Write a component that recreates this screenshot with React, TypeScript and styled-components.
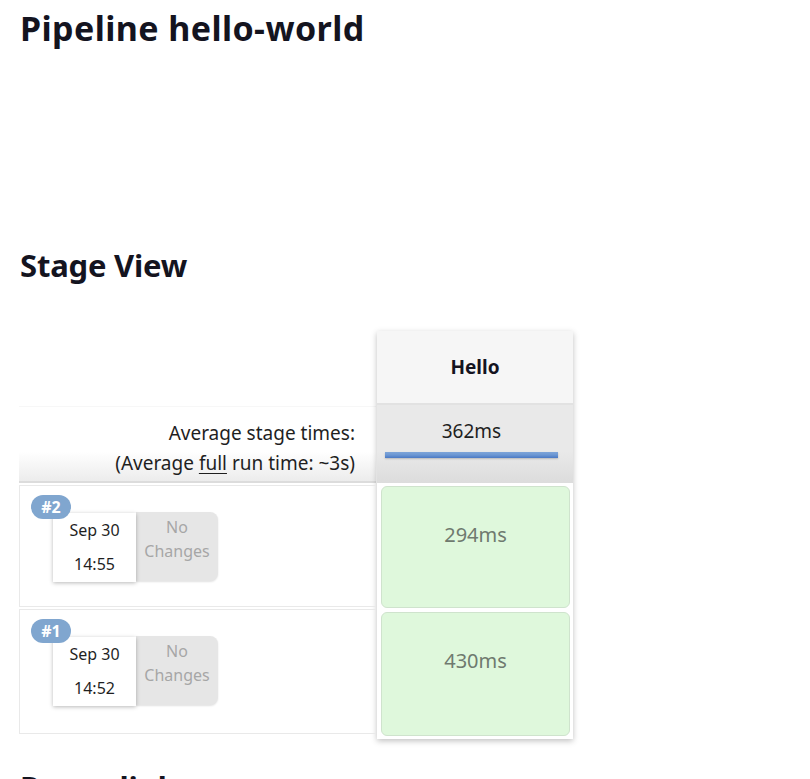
import React from "react";
import styled, { createGlobalStyle } from "styled-components";

const Global = createGlobalStyle`
  html, body { margin: 0; padding: 0; background: #fff; }
  body { font-family: "Noto Sans", "Open Sans", sans-serif; color: #14141f; }
`;

const Page = styled.div`
  padding: 0 20px;
  width: 810px;
  height: 779px;
  box-sizing: border-box;
  overflow: hidden;
`;

const Title = styled.h1`
  margin: 0;
  padding-top: 4px;
  font-size: 34px;
  line-height: 48px;
  font-weight: 700;
  letter-spacing: 0.4px;
`;

const SectionTitle = styled.h2<{ $top: number }>`
  margin: ${(p) => p.$top}px 0 0;
  font-size: 31px;
  line-height: 48px;
  font-weight: 700;
  letter-spacing: -0.2px;
`;

const Table = styled.div`
  display: flex;
  margin-top: 42px;
  margin-left: -1px;
`;

const LeftCol = styled.div`
  width: 357px;
  display: flex;
  flex-direction: column;
`;

const HeaderSpacer = styled.div`
  height: 75px;
`;

const AvgLabel = styled.div`
  height: 77px;
  box-sizing: border-box;
  border-top: 1px solid #f7f7f7;
  border-bottom: 2px solid #dcdcdc;
  background: linear-gradient(to bottom, #fff 0%, #fff 60%, #ececec 100%);
  text-align: right;
  padding: 11px 21px 0 0;
  font-size: 19px;
  line-height: 30px;
  color: #1f1f1f;
`;

const Underline = styled.span`
  text-decoration: underline;
  text-underline-offset: 3px;
`;

const RunRow = styled.div<{ $h: number; $mt: number }>`
  height: ${(p) => p.$h}px;
  margin-top: ${(p) => p.$mt}px;
  box-sizing: border-box;
  border: 1px solid #e9e9e9;
  border-right: none;
  padding: 10px 0 0 11px;
  position: relative;
`;

const Badge = styled.span`
  position: absolute;
  left: 11px;
  top: 9px;
  z-index: 2;
  width: 40px;
  height: 24px;
  border-radius: 12px;
  background: #80a6cf;
  color: #fff;
  font-size: 16px;
  font-weight: 700;
  line-height: 24px;
  text-align: center;
`;

const Chip = styled.div`
  display: flex;
  margin: 17px 0 0 22px;
`;

const DateBox = styled.div`
  width: 83px;
  height: 69px;
  background: #fff;
  box-shadow: 0 1px 4px rgba(0, 0, 0, 0.28);
  position: relative;
  z-index: 1;
  display: flex;
  flex-direction: column;
  align-items: center;
  justify-content: center;
  gap: 10px;
  padding-bottom: 2px;
  box-sizing: border-box;
  font-size: 16px;
  line-height: 24px;
  color: #1f1f1f;
`;

const ChangesBox = styled.div`
  width: 82px;
  height: 69px;
  margin-top: -1px;
  background: #e6e6e6;
  border-radius: 0 8px 8px 0;
  box-shadow: 0 1px 2px rgba(0, 0, 0, 0.12);
  display: flex;
  flex-direction: column;
  align-items: center;
  padding-top: 3px;
  box-sizing: border-box;
  font-size: 16px;
  line-height: 24px;
  color: #a6a6a6;
`;

const StageCol = styled.div`
  width: 196px;
  margin-left: 1px;
  box-shadow: 0 2px 6px rgba(0, 0, 0, 0.25);
  display: flex;
  flex-direction: column;
  height: 408px;
  background: #fff;
`;

const StageHeader = styled.div`
  height: 74px;
  background: #f6f6f6;
  display: flex;
  align-items: center;
  justify-content: center;
  font-size: 19px;
  font-weight: 700;
  border-bottom: 2px solid #e2e2e2;
  box-sizing: border-box;
`;

const StageAvg = styled.div`
  height: 78px;
  background: linear-gradient(to bottom, #e9e9e9 0%, #e9e9e9 60%, #dcdcdc 100%);
  display: flex;
  flex-direction: column;
  padding: 14px 15px 0 8px;
  box-sizing: border-box;
  font-size: 19px;
  line-height: 24px;
  text-align: center;
  color: #1f1f1f;
`;

const Bar = styled.div`
  margin-top: 9px;
  height: 6px;
  background: linear-gradient(to bottom, #7ea5d8 0%, #6c97d3 50%, #4a79c4 100%);
  box-shadow: 0 1px 2px rgba(0, 0, 0, 0.2);
`;

const StageCell = styled.div<{ $h: number; $mt: number }>`
  height: ${(p) => p.$h}px;
  margin: ${(p) => p.$mt}px 3px 0 4px;
  box-sizing: border-box;
  background: #dff8dc;
  border: 1px solid #cfe3cd;
  border-radius: 6px;
  display: flex;
  justify-content: center;
  padding-top: 34px;
  font-size: 20px;
  line-height: 28px;
  color: #6f7a6f;
`;

const runs = [
  { id: "#2", date: "Sep 30", time: "14:55", dur: "294ms", h: 122, mt: 2, sh: 122, smt: 3 },
  { id: "#1", date: "Sep 30", time: "14:52", dur: "430ms", h: 125, mt: 2, sh: 124, smt: 4 },
];

export default function App() {
  return (
    <Page>
      <Global />
      <Title>Pipeline hello-world</Title>
      <SectionTitle $top={189}>Stage View</SectionTitle>
      <Table>
        <LeftCol>
          <HeaderSpacer />
          <AvgLabel>
            Average stage times:
            <br />
            (Average <Underline>full</Underline> run time: ~3s)
          </AvgLabel>
          {runs.map((r) => (
            <RunRow key={r.id} $h={r.h} $mt={r.mt}>
              <Badge>{r.id}</Badge>
              <Chip>
                <DateBox>
                  <span>{r.date}</span>
                  <span>{r.time}</span>
                </DateBox>
                <ChangesBox>
                  <span>No</span>
                  <span>Changes</span>
                </ChangesBox>
              </Chip>
            </RunRow>
          ))}
        </LeftCol>
        <StageCol>
          <StageHeader>Hello</StageHeader>
          <StageAvg>
            <span>362ms</span>
            <Bar />
          </StageAvg>
          {runs.map((r) => (
            <StageCell key={r.id} $h={r.sh} $mt={r.smt}>
              {r.dur}
            </StageCell>
          ))}
        </StageCol>
      </Table>
      <SectionTitle $top={24}>Permalinks</SectionTitle>
    </Page>
  );
}
